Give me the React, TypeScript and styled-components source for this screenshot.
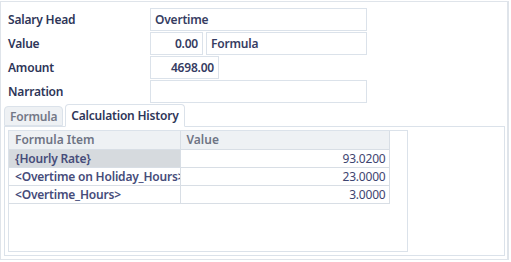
import React, { useState } from 'react';
import styled, { createGlobalStyle } from 'styled-components';

const GlobalStyle = createGlobalStyle`
  html, body {
    margin: 0;
    padding: 0;
    background: #ffffff;
  }
  body {
    font-family: "Noto Sans", "Open Sans", sans-serif;
    font-size: 12px;
    color: #33395e;
  }
`;

const Panel = styled.div`
  box-sizing: border-box;
  margin-top: 1px;
  width: 509px;
  height: 259px;
  border: 1px solid #dfe4ea;
  border-right-width: 2px;
  padding: 6px 2px 3px 3px;
  display: flex;
  flex-direction: column;
`;

const Form = styled.div`
  display: grid;
  grid-template-columns: 142px 217px;
  grid-auto-rows: 23px;
  row-gap: 1px;
  padding-left: 4px;
`;

const Label = styled.div`
  display: flex;
  align-items: center;
  font-weight: 600;
  color: #2e3558;
  letter-spacing: -0.2px;
`;

const Field = styled.div<{ $width?: number; $align?: 'left' | 'right' }>`
  box-sizing: border-box;
  width: ${(p) => (p.$width ? `${p.$width}px` : '100%')};
  height: 23px;
  border: 1px solid #dbe2ea;
  background: #ffffff;
  display: flex;
  align-items: center;
  justify-content: ${(p) => (p.$align === 'right' ? 'flex-end' : 'flex-start')};
  padding: 0 4px;
  font-weight: 600;
  color: #363c62;
  letter-spacing: -0.2px;
`;

const FieldGroup = styled.div`
  display: flex;
  gap: 3px;
`;

const TabStrip = styled.div`
  display: flex;
  align-items: flex-end;
  gap: 2px;
  height: 22px;
  margin-top: 1px;
  position: relative;
  z-index: 1;
`;

const Tab = styled.div<{ $active?: boolean }>`
  box-sizing: border-box;
  height: ${(p) => (p.$active ? '23px' : '20px')};
  margin-bottom: ${(p) => (p.$active ? '-1px' : '0')};
  padding: 0 5px;
  border: 1px solid #dbe2ea;
  border-bottom: 1px solid ${(p) => (p.$active ? '#ffffff' : '#dbe2ea')};
  border-radius: 4px 4px 0 0;
  background: ${(p) => (p.$active ? '#ffffff' : '#eef1f4')};
  color: ${(p) => (p.$active ? '#2e3558' : '#737887')};
  font-weight: 600;
  letter-spacing: -0.2px;
  display: flex;
  align-items: center;
  cursor: pointer;
`;

const TabBody = styled.div`
  box-sizing: border-box;
  flex: 1;
  border: 1px solid #dbe2ea;
  padding: 3px;
`;

const GridBox = styled.div`
  box-sizing: border-box;
  width: 400px;
  height: 122px;
  border: 1px solid #dbe2ea;
  overflow: hidden;
`;

const Table = styled.table`
  border-collapse: collapse;
  table-layout: fixed;
  width: 380px;
`;

const HeadCell = styled.th<{ $width: number }>`
  width: ${(p) => p.$width}px;
  height: 18px;
  padding: 0 6px;
  box-sizing: border-box;
  background: #eef1f4;
  border-right: 1px solid #d8dee5;
  border-bottom: 1px solid #d8dee5;
  text-align: left;
  font-weight: 600;
  color: #6f7484;
  white-space: nowrap;
  overflow: hidden;
`;

const Cell = styled.td<{ $selected?: boolean; $align?: 'left' | 'right' }>`
  height: 17px;
  padding: 0 ${(p) => (p.$align === 'right' ? '3px' : '6px')};
  box-sizing: border-box;
  background: ${(p) => (p.$selected ? '#d6dade' : '#ffffff')};
  border-right: 1px solid #d8dee5;
  border-bottom: 1px solid #d8dee5;
  text-align: ${(p) => p.$align || 'left'};
  font-weight: ${(p) => (p.$align === 'right' ? 400 : 600)};
  color: ${(p) => (p.$align === 'right' ? '#3e4470' : '#464c7a')};
  white-space: nowrap;
  overflow: hidden;
  letter-spacing: -0.2px;
`;

const rows = [
  { item: '{Hourly Rate}', value: '93.0200' },
  { item: '<Overtime on Holiday_Hours>', value: '23.0000' },
  { item: '<Overtime_Hours>', value: '3.0000' },
];

const App = () => {
  const [tab, setTab] = useState('history');
  const [selected] = useState(0);

  return (
    <>
      <GlobalStyle />
      <Panel>
        <Form>
          <Label>Salary Head</Label>
          <Field>Overtime</Field>
          <Label>Value</Label>
          <FieldGroup>
            <Field $width={69} $align="right">0.00</Field>
            <Field>Formula</Field>
          </FieldGroup>
          <Label>Amount</Label>
          <Field $width={69} $align="right">4698.00</Field>
          <Label>Narration</Label>
          <Field />
        </Form>
        <TabStrip>
          <Tab $active={tab === 'formula'} onClick={() => setTab('formula')}>Formula</Tab>
          <Tab $active={tab === 'history'} onClick={() => setTab('history')}>Calculation History</Tab>
        </TabStrip>
        <TabBody>
          <GridBox>
            <Table>
              <thead>
                <tr>
                  <HeadCell $width={171}>Formula Item</HeadCell>
                  <HeadCell $width={209}>Value</HeadCell>
                </tr>
              </thead>
              <tbody>
                {rows.map((row, i) => (
                  <tr key={row.item}>
                    <Cell $selected={i === selected}>{row.item}</Cell>
                    <Cell $align="right">{row.value}</Cell>
                  </tr>
                ))}
              </tbody>
            </Table>
          </GridBox>
        </TabBody>
      </Panel>
    </>
  );
};

export default App;
